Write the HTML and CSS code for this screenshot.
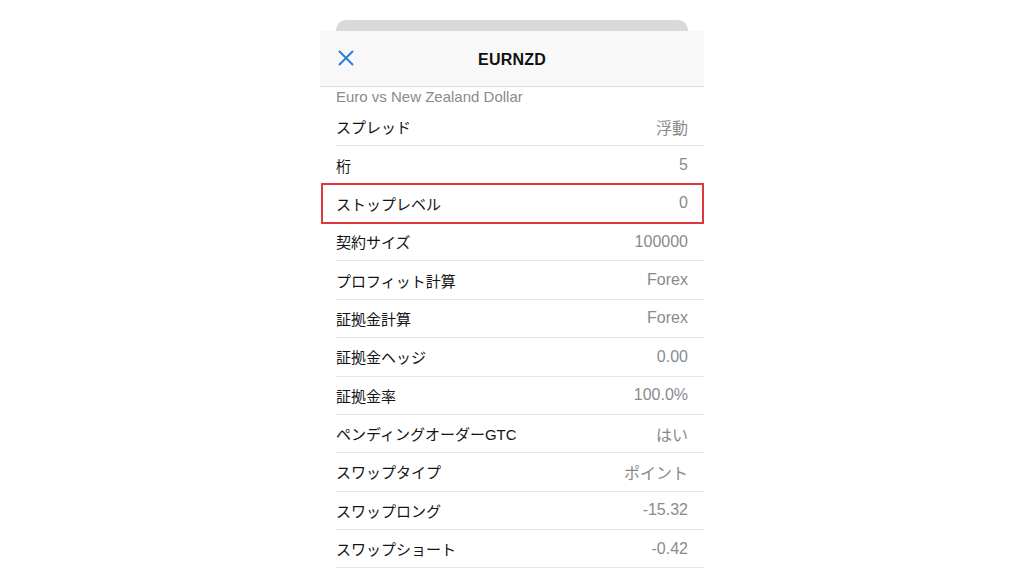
FILE: index.html
```html
<!DOCTYPE html>
<html lang="ja">
<head>
<meta charset="utf-8">
<title>EURNZD</title>
<link rel="stylesheet" href="styles.css">
</head>
<body>
<div class="sheet">
  <div class="back-sheet"></div>
  <div class="panel">
    <header class="nav">
      <span class="close" aria-label="閉じる">
        <svg width="16" height="16" viewBox="0 0 16 16"><path d="M1.5 1.5 L14.5 14.5 M14.5 1.5 L1.5 14.5" stroke="#2f7ddb" stroke-width="2" stroke-linecap="round" fill="none"/></svg>
      </span>
      <h1 class="title">EURNZD</h1>
    </header>
    <div class="subtitle">Euro vs New Zealand Dollar</div>
    <ul class="list">
      <li class="row"><span class="label">スプレッド</span><span class="value">浮動</span></li>
      <li class="row"><span class="label">桁</span><span class="value">5</span></li>
      <li class="row highlighted"><span class="label">ストップレベル</span><span class="value">0</span></li>
      <li class="row"><span class="label">契約サイズ</span><span class="value">100000</span></li>
      <li class="row"><span class="label">プロフィット計算</span><span class="value">Forex</span></li>
      <li class="row"><span class="label">証拠金計算</span><span class="value">Forex</span></li>
      <li class="row"><span class="label">証拠金ヘッジ</span><span class="value">0.00</span></li>
      <li class="row"><span class="label">証拠金率</span><span class="value">100.0%</span></li>
      <li class="row"><span class="label">ペンディングオーダーGTC</span><span class="value">はい</span></li>
      <li class="row"><span class="label">スワップタイプ</span><span class="value">ポイント</span></li>
      <li class="row"><span class="label">スワップロング</span><span class="value">-15.32</span></li>
      <li class="row"><span class="label">スワップショート</span><span class="value">-0.42</span></li>
    </ul>
  </div>
</div>
</body>
</html>
```
FILE: styles.css
```css
* { box-sizing: border-box; }
html, body {
  margin: 0;
  padding: 0;
  background: #ffffff;
  height: 576px;
  overflow: hidden;
}
body {
  font-family: "Liberation Sans", "Noto Sans CJK JP", sans-serif;
  color: #141414;
  display: flex;
  justify-content: center;
}
.sheet {
  width: 384px;
  padding-top: 20px;
}
.back-sheet {
  height: 11px;
  margin: 0 16px;
  background: #d9d9d9;
  border-radius: 10px 10px 0 0;
}
.panel {
  background: #ffffff;
}
.nav {
  position: relative;
  height: 56px;
  background: #f8f8f8;
  border-bottom: 1px solid #dcdcdc;
  display: flex;
  align-items: center;
  justify-content: center;
}
.close {
  position: absolute;
  left: 18px;
  top: 19px;
  display: flex;
}
.title {
  margin: 0;
  font-size: 16px;
  font-weight: 700;
  color: #111;
  letter-spacing: 0.2px;
  padding-top: 2px;
}
.subtitle {
  height: 21px;
  padding: 1px 16px 0;
  font-size: 15px;
  color: #8a8a8e;
  line-height: 18px;
}
.list {
  list-style: none;
  margin: 0;
  padding: 0 0 0 16px;
}
.row {
  position: relative;
  height: 38.36px;
  border-bottom: 1px solid #e6e6e6;
  display: flex;
  align-items: center;
  justify-content: space-between;
  padding-right: 16px;
  font-size: 15px;
}
.label {
  color: #141414;
}
.value {
  color: #8a8a8e;
  font-size: 16px;
}
.row.highlighted::after {
  content: "";
  position: absolute;
  left: -15px;
  right: 0;
  top: -2px;
  bottom: -2px;
  border: 2px solid #e0373d;
}
```
